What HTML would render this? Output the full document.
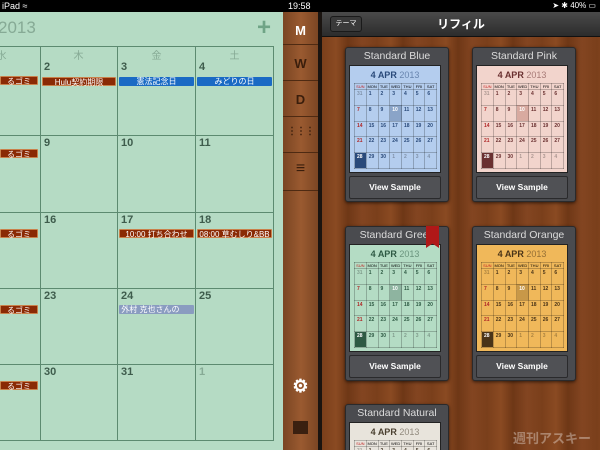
<!DOCTYPE html>
<html style="width:600px;height:450px;overflow:hidden"><head><meta charset="utf-8"><style>
*{margin:0;padding:0;box-sizing:border-box}
body{width:600px;height:450px;overflow:hidden;position:relative;background:#6b3a1c;font-family:"Liberation Sans","Noto Sans CJK JP",sans-serif}
.abs{position:absolute}
#sb{left:0;top:0;width:600px;height:12px;background:#000;color:#fff;font-size:9px;line-height:12px}
#left{left:0;top:12px;width:283px;height:438px;background:#b5dbc4}
.vl{position:absolute;width:1px;background:#5c8a70}
.hl{position:absolute;height:1px;background:#5c8a70}
.dh{position:absolute;top:47px;font-size:10px;color:#86aa95;text-align:center;width:77px}
.dn{position:absolute;font-size:11px;font-weight:bold;color:#3e5c4c}
.ev{position:absolute;height:9px;font-size:8px;line-height:9px;color:#fff;text-align:center;border-radius:1px}
.r{background:#8a2a05;border:1px solid #c9804a}
.b{background:#1a6ac4}
#side{left:283px;top:12px;width:36px;height:438px;background:linear-gradient(90deg,#7a4523,#9a5a30 50%,#7a4523)}
#div{left:318px;top:12px;width:4px;height:438px;background:#1a1410}
.sl{position:absolute;left:0;width:35px;height:1px;background:#4e2a12}
.st{position:absolute;left:0;width:35px;text-align:center;color:#3a1e0c;font-size:13px;font-weight:bold}
#wood{left:322px;top:37px;width:278px;height:413px;background:repeating-linear-gradient(90deg,#7a3f1b 0,#8a4a22 14px,#6e3716 26px,#834521 40px,#7a3f1b 55px)}
#nav{left:322px;top:12px;width:278px;height:25px;background:linear-gradient(#4a4a4a,#2c2c2c);border-bottom:1px solid #111}
#clip{left:322px;top:37px;width:278px;height:413px;overflow:hidden}
.card{position:absolute;width:104px;background:#4a4b4f;border:1px solid #2a2a2c;border-radius:3px;box-shadow:0 1px 3px rgba(0,0,0,.6)}
.ct{height:17px;text-align:center;color:#dcdcdc;font-size:10.5px;line-height:17px}
.cal{position:absolute;left:3px;top:17px;width:92px;height:108px;border:1px solid #222;overflow:hidden}
.btn{position:absolute;left:3px;top:128px;width:92px;height:23px;background:#505155;border:1px solid #2a2a2c;border-radius:2px;color:#fff;font-size:8.5px;font-weight:bold;text-align:center;line-height:21px}
.ttl{position:absolute;top:4px;width:100%;text-align:center;font-size:9px;font-weight:bold}
.ttl span{font-weight:normal;opacity:.55}
.g{position:absolute;left:4px;top:17px;width:83px;border-collapse:collapse;font-size:5px;font-weight:bold}
.g td{border:1px solid rgba(0,0,0,.22);width:12px;vertical-align:top;padding:1px 0 0 2px}
.g tr.h td{height:6px;font-size:4px;font-weight:normal;padding:0;text-align:center}
.g tr.w td{height:15.8px}
</style></head><body>
<div id="sb" class="abs"><span style="position:absolute;left:2px">iPad ≈</span><span style="position:absolute;left:288px">19:58</span><span style="position:absolute;right:4px;font-size:8px">➤ ✱ 40% ▭</span></div>
<div id="left" class="abs">
<div class="abs" style="left:-2px;top:6px;font-size:17px;color:#86aa95">2013</div>
<div class="abs" style="left:257px;top:2px;font-size:24px;font-weight:bold;color:#6fa486">+</div>
<div class="hl" style="left:0;top:34px;width:274px"></div>
<div class="hl" style="left:0;top:123px;width:274px"></div>
<div class="hl" style="left:0;top:200px;width:274px"></div>
<div class="hl" style="left:0;top:276px;width:274px"></div>
<div class="hl" style="left:0;top:352px;width:274px"></div>
<div class="hl" style="left:0;top:428px;width:274px"></div>
<div class="vl" style="left:40px;top:34px;height:395px"></div>
<div class="vl" style="left:117px;top:34px;height:395px"></div>
<div class="vl" style="left:195px;top:34px;height:395px"></div>
<div class="vl" style="left:273px;top:34px;height:395px"></div>
<div class="dh" style="left:-37px;top:35px">水</div>
<div class="dh" style="left:40px;top:35px">木</div>
<div class="dh" style="left:118px;top:35px">金</div>
<div class="dh" style="left:196px;top:35px">土</div>
</div>
<div id="cells"></div>
<div id="side" class="abs">
<div class="sl" style="top:32px"></div><div class="sl" style="top:68px"></div><div class="sl" style="top:104px"></div><div class="sl" style="top:140px"></div><div class="sl" style="top:178px"></div>
<div class="st" style="top:11px;color:#fff">M</div>
<div class="st" style="top:44px">W</div>
<div class="st" style="top:80px">D</div>
<div class="st" style="top:114px;font-size:10px;letter-spacing:-1px">⋮⋮⋮</div>
<div class="st" style="top:148px;font-size:16px">≡</div>
<div class="st" style="top:364px;color:#fff;font-size:18px">⚙</div>
<div class="abs" style="left:10px;top:409px;width:15px;height:13px;background:#3a2010"></div>
</div>
<div id="div" class="abs"></div>
<div id="wood" class="abs"></div>
<div id="nav" class="abs">
<div class="abs" style="left:8px;top:4px;width:32px;height:16px;background:#3a3a3a;border:1px solid #1a1a1a;border-radius:3px;color:#fff;font-size:7px;line-height:14px;text-align:center">テーマ</div>
<div class="abs" style="left:0;width:278px;top:3px;text-align:center;color:#fff;font-size:12px;font-weight:bold">リフィル</div>
</div>
<div id="clip" class="abs"><div id="cards"></div></div>
<div class="abs" style="left:513px;top:428px;color:rgba(255,255,255,.35);font-size:13px;font-weight:bold">週刊アスキー</div>
<script>
var c='';
function n(x,y,t,col){c+='<div class="dn" style="left:'+x+'px;top:'+y+'px;'+(col?'color:'+col:'')+'">'+t+'</div>';}
var rows=[59,135,212,288,364],cols=[-40,42,119,197];
var nums=[['','2','3','4'],['','9','10','11'],['','16','17','18'],['','23','24','25'],['','30','31','1']];
for(var r=0;r<5;r++)for(var k=1;k<4;k++)n(cols[k]+2,rows[r]+2,nums[r][k],nums[r][k]=='1'?'#86aa95':'');
function ev(x,y,w,cls,t){c+='<div class="ev '+cls+'" style="left:'+x+'px;top:'+y+'px;width:'+w+'px">'+t+'</div>';}
[76,149,229,305,381].forEach(function(y){ev(0,y,38,'r','るゴミ');});
ev(42,77,74,'r','Hulu契約期限');ev(119,77,75,'b','憲法記念日');ev(197,77,75,'b','みどりの日');
ev(119,229,75,'r','10:00 打ち合わせ');ev(197,229,75,'r','08:00 草むしり&BB');
c+='<div class="ev" style="left:119px;top:305px;width:75px;background:#8a9cc0;text-align:left">&nbsp;外村 克也さんの</div>';
document.getElementById('cells').innerHTML=c;
function card(x,y,name,bg,tc,hi,mark){
 var h='<div class="card" style="left:'+x+'px;top:'+y+'px;height:155px"><div class="ct">'+name+'</div><div class="cal" style="background:'+bg+'"><div class="ttl" style="color:'+tc+'">4 APR <span>2013</span></div><table class="g"><tr class="h"><td style="color:#c02020">SUN</td><td>MON</td><td>TUE</td><td>WED</td><td>THU</td><td>FRI</td><td>SAT</td></tr>';
 var d=[[31,1,2,3,4,5,6],[7,8,9,10,11,12,13],[14,15,16,17,18,19,20],[21,22,23,24,25,26,27],[28,29,30,1,2,3,4]];
 for(var i=0;i<5;i++){h+='<tr class="w">';for(var j=0;j<7;j++){var v=d[i][j],st='color:'+tc;
  if(j==0)st='color:#b02828';if((i==0&&j==0)||(i==4&&j>2))st='color:rgba(0,0,0,.3)';
  if(i==1&&j==3)st='background:'+hi+';color:#fff';if(i==4&&j==0)st='background:'+tc+';color:#fff';
  h+='<td style="'+st+'">'+v+'</td>';}h+='</tr>';}
 h+='</table></div><div class="btn">View Sample</div>'+(mark?'<div class="abs" style="left:80px;top:-1px;width:13px;height:22px;background:#b01818;clip-path:polygon(0 0,100% 0,100% 100%,50% 80%,0 100%)"></div>':'')+'</div>';return h;}
var s=card(23,10,'Standard Blue','#b4cdee','#2a4a7a','#8aa4c8')+card(150,10,'Standard Pink','#f2d4cc','#6a3030','#d8aaa0')
+card(23,189,'Standard Green','#b4dcc4','#2e5a44','#8eb4a0',1)+card(150,189,'Standard Orange','#f0b85a','#4a3418','#c89848')
+card(23,367,'Standard Natural','#e8e4dc','#4a4030','#c8c0b0');
document.getElementById('cards').innerHTML=s;
</script>
</body></html>
